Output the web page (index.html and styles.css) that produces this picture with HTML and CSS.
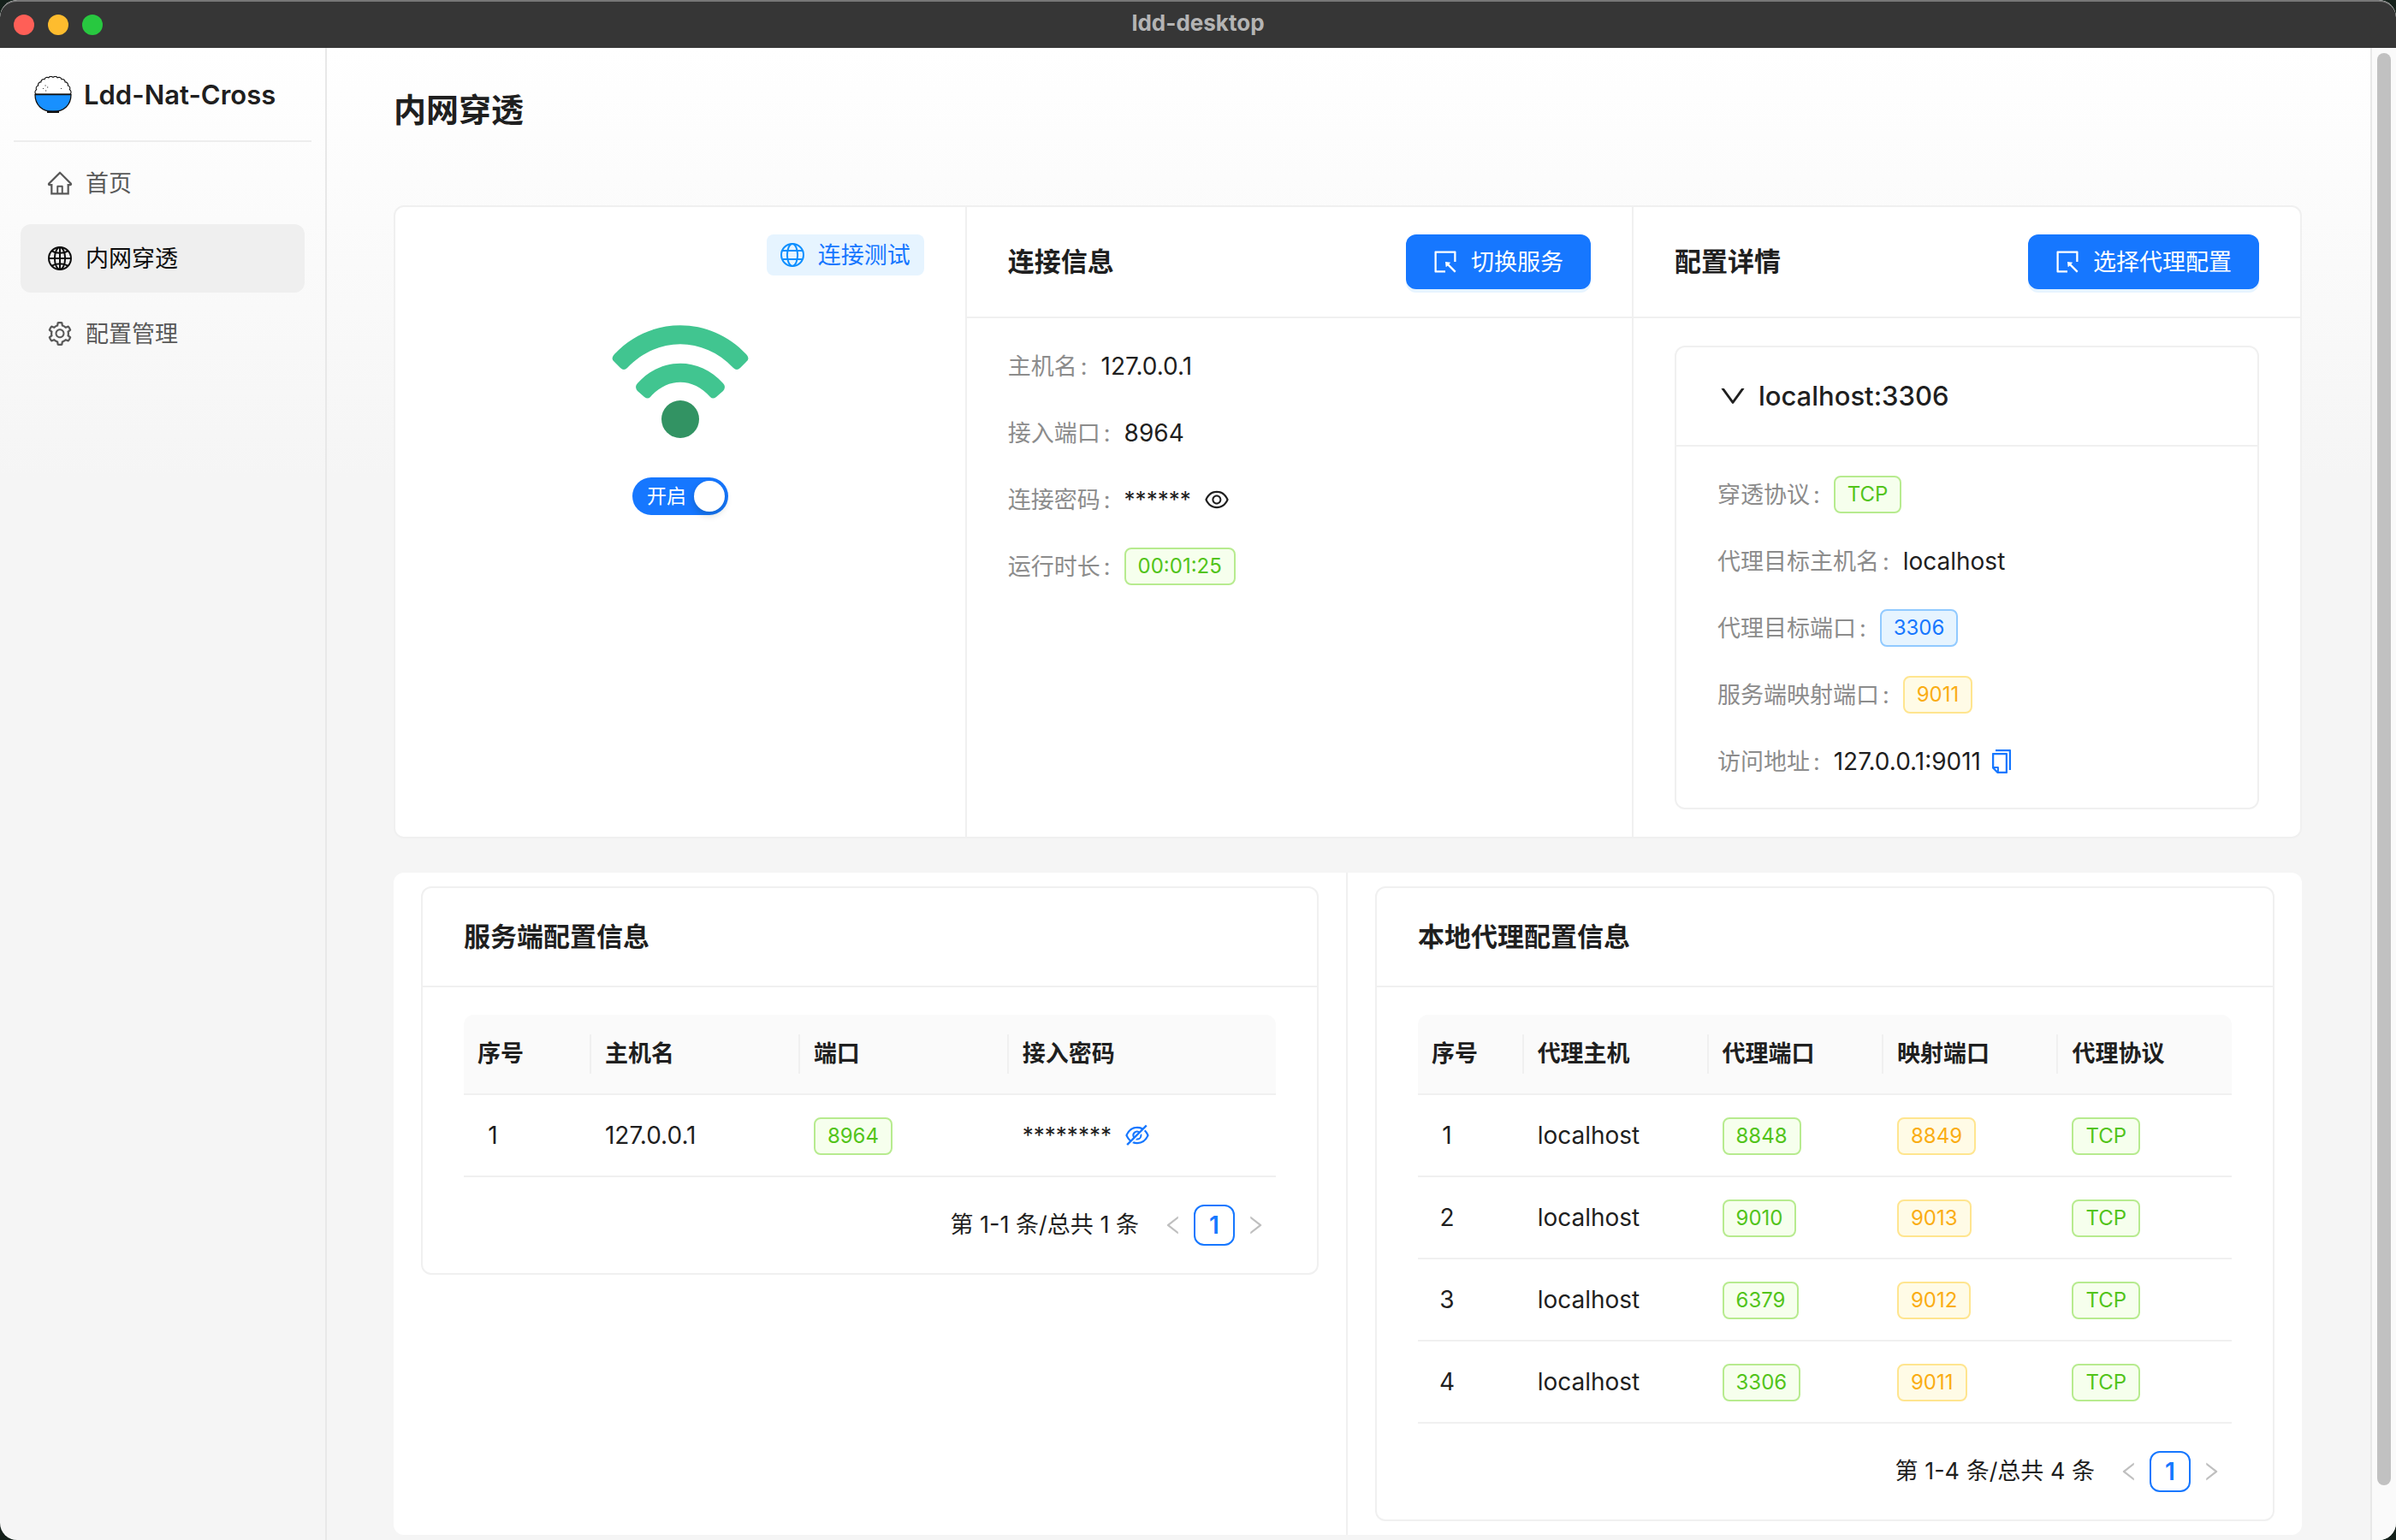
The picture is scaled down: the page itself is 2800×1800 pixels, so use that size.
FILE: index.html
```html
<!DOCTYPE html>
<html lang="zh-CN">
<head>
<meta charset="utf-8">
<title>ldd-desktop</title>
<link rel="stylesheet" href="styles.css">
</head>
<body>
<svg class="sprite" aria-hidden="true">
  <symbol id="i-home" viewBox="0 0 1024 1024"><path d="M946.5 505L560.1 118.8l-25.9-25.9a31.5 31.5 0 00-44.4 0L77.5 505a63.9 63.9 0 00-18.8 46c.4 35.2 29.7 63.3 64.9 63.3h42.5V940h691.8V614.3h43.4c17.1 0 33.2-6.7 45.3-18.8a63.6 63.6 0 0018.7-45.3c0-17-6.7-33.1-18.8-45.2zM568 868H456V664h112v204zm217.9-325.7V868H632V640c0-22.1-17.9-40-40-40H432c-22.1 0-40 17.9-40 40v228H238.1V542.3h-96l370-369.7 23.1 23.1L882 542.3h-96.1z"/></symbol>
  <symbol id="i-globe" viewBox="0 0 1024 1024"><g fill="none" stroke="currentColor" stroke-width="64"><circle cx="512" cy="512" r="415"/><ellipse cx="512" cy="512" rx="195" ry="415"/><path d="M512 97v830M97 512h830M215 235c150 100 444 100 594 0M215 789c150-100 444-100 594 0"/></g></symbol>
  <symbol id="i-globe-light" viewBox="0 0 1024 1024"><g fill="none" stroke="currentColor" stroke-width="64"><circle cx="512" cy="512" r="415"/><ellipse cx="512" cy="512" rx="195" ry="415"/><path d="M160 350h704M160 674h704"/></g></symbol>
  <symbol id="i-setting" viewBox="0 0 1024 1024"><path d="M924.8 625.7l-65.5-56c3.1-19 4.7-38.4 4.7-57.8s-1.6-38.8-4.7-57.8l65.5-56a32.03 32.03 0 009.3-35.2l-.9-2.6a443.74 443.74 0 00-79.7-137.9l-1.8-2.1a32.12 32.12 0 00-35.1-9.5l-81.3 28.9c-30-24.6-63.5-44-99.7-57.6l-15.7-85a32.05 32.05 0 00-25.8-25.7l-2.7-.5c-52.1-9.4-106.9-9.4-159 0l-2.7.5a32.05 32.05 0 00-25.8 25.7l-15.8 85.4a351.86 351.86 0 00-99 57.4l-81.9-29.1a32 32 0 00-35.1 9.5l-1.8 2.1a446.02 446.02 0 00-79.7 137.9l-.9 2.6c-4.5 12.5-.8 26.5 9.3 35.2l66.3 56.6c-3.1 18.8-4.6 38-4.6 57.1 0 19.2 1.5 38.4 4.6 57.1L99 625.5a32.03 32.03 0 00-9.3 35.2l.9 2.6c18.1 50.4 44.9 96.9 79.7 137.9l1.8 2.1a32.12 32.12 0 0035.1 9.5l81.9-29.1c29.8 24.5 63.1 43.9 99 57.4l15.8 85.4a32.05 32.05 0 0025.8 25.7l2.7.5a449.4 449.4 0 00159 0l2.7-.5a32.05 32.05 0 0025.8-25.7l15.7-85a350 350 0 0099.7-57.6l81.3 28.9a32 32 0 0035.1-9.5l1.8-2.1c34.8-41.1 61.6-87.5 79.7-137.9l.9-2.6c4.5-12.3.8-26.3-9.3-35zM788.3 465.9c2.5 15.1 3.8 30.6 3.8 46.1s-1.3 31-3.8 46.1l-6.6 40.1 74.7 63.9a370.03 370.03 0 01-42.6 73.6L721 702.8l-31.4 25.8c-23.9 19.6-50.5 35-79.3 45.8l-38.1 14.3-17.9 97a377.5 377.5 0 01-85 0l-17.9-97.2-37.8-14.5c-28.5-10.8-55-26.2-78.7-45.7l-31.4-25.9-93.4 33.2c-17-22.9-31.2-47.6-42.6-73.6l75.5-64.5-6.5-40c-2.4-14.9-3.7-30.3-3.7-45.5 0-15.3 1.2-30.6 3.7-45.5l6.5-40-75.5-64.5c11.3-26.1 25.6-50.7 42.6-73.6l93.4 33.2 31.4-25.9c23.7-19.5 50.2-34.9 78.7-45.7l37.9-14.3 17.9-97.2c28.1-3.2 56.8-3.2 85 0l17.9 97 38.1 14.3c28.7 10.8 55.4 26.2 79.3 45.8l31.4 25.8 92.8-32.9c17 22.9 31.2 47.6 42.6 73.6L781.8 426l6.5 39.9zM512 326c-97.2 0-176 78.8-176 176s78.8 176 176 176 176-78.8 176-176-78.8-176-176-176zm79.2 255.2A111.6 111.6 0 01512 614c-29.9 0-58-11.7-79.2-32.8A111.6 111.6 0 01400 502c0-29.9 11.7-58 32.8-79.2C454 401.6 482.1 390 512 390c29.9 0 58 11.6 79.2 32.8A111.6 111.6 0 01624 502c0 29.9-11.7 58-32.8 79.2z"/></symbol>
  <symbol id="i-select" viewBox="0 0 1024 1024"><path d="M880 112H144c-17.7 0-32 14.3-32 32v736c0 17.7 14.3 32 32 32h360c4.4 0 8-3.6 8-8v-56c0-4.4-3.6-8-8-8H184V184h656v320c0 4.4 3.6 8 8 8h56c4.4 0 8-3.6 8-8V144c0-17.7-14.3-32-32-32zM653.3 599.4l52.2-52.2a8.01 8.01 0 00-4.7-13.6l-179.4-21c-5.1-.6-9.5 3.7-8.9 8.9l21 179.4c.8 6.6 8.9 9.4 13.6 4.7l52.4-52.4 256.2 256.2c3.1 3.1 8.2 3.1 11.3 0l42.4-42.4c3.1-3.1 3.1-8.2 0-11.3L653.3 599.4z"/></symbol>
  <symbol id="i-eye" viewBox="0 0 1024 1024"><path d="M942.2 486.2C847.4 286.5 704.1 186 512 186c-192.2 0-335.4 100.5-430.2 300.3a60.3 60.3 0 000 51.5C176.6 737.5 319.9 838 512 838c192.2 0 335.4-100.5 430.2-300.3 7.7-16.2 7.7-35 0-51.5zM512 766c-161.3 0-279.4-81.8-362.7-254C232.6 339.8 350.7 258 512 258c161.3 0 279.4 81.8 362.7 254C791.5 684.2 673.4 766 512 766zm-4-430c-97.2 0-176 78.8-176 176s78.8 176 176 176 176-78.8 176-176-78.8-176-176-176zm0 288c-61.9 0-112-50.1-112-112s50.1-112 112-112 112 50.1 112 112-50.1 112-112 112z"/></symbol>
  <symbol id="i-eye-off" viewBox="0 0 1024 1024"><path d="M942.2 486.2Q889.47 375.11 816.7 305l-50.88 50.88C807.31 395.53 843.45 447.4 874.7 512 791.5 684.2 673.4 766 512 766q-72.67 0-133.87-22.38L323 798.75Q408 838 512 838q288.3 0 430.2-300.3a60.29 60.29 0 000-51.5zm-63.57-320.64L836 122.88a8 8 0 00-11.32 0L715.31 232.2Q624.86 186 512 186q-288.3 0-430.2 300.3a60.3 60.3 0 000 51.5q56.69 119.4 136.5 191.41L112.48 835a8 8 0 000 11.31L155.17 889a8 8 0 0011.31 0l712.15-712.12a8 8 0 000-11.32zM149.3 512C232.6 339.8 350.7 258 512 258c54.54 0 104.13 9.36 149.12 28.39l-70.3 70.3a176 176 0 00-238.13 238.13l-83.42 83.42C223.1 637.49 183.3 582.28 149.3 512zm246.7 0a112.11 112.11 0 01146.2-106.69L401.31 546.2A112 112 0 01396 512z"/><path d="M508 624c-3.46 0-6.87-.16-10.25-.47l-52.82 52.82a176.09 176.09 0 00227.42-227.42l-52.82 52.82c.31 3.38.47 6.79.47 10.25a111.94 111.94 0 01-112 112z"/></symbol>
  <symbol id="i-copy" viewBox="0 0 1024 1024"><path d="M832 64H296c-4.4 0-8 3.6-8 8v56c0 4.4 3.6 8 8 8h496v688c0 4.4 3.6 8 8 8h56c4.4 0 8-3.6 8-8V96c0-17.7-14.3-32-32-32zM704 192H192c-17.7 0-32 14.3-32 32v530.7c0 8.5 3.4 16.6 9.4 22.6l173.3 173.3c2.2 2.2 4.7 4 7.4 5.5v1.9h4.2c3.5 1.3 7.2 2 11 2H704c17.7 0 32-14.3 32-32V224c0-17.7-14.3-32-32-32zM350 856.2L263.9 770H350v86.2zM664 888H414V746c0-22.1-17.9-40-40-40H232V264h432v624z"/></symbol>
  <symbol id="i-down" viewBox="0 0 1024 1024"><path d="M884 256h-75c-5.1 0-9.9 2.5-12.9 6.6L512 654.2 227.9 262.6c-3-4.1-7.8-6.6-12.9-6.6h-75c-6.5 0-10.3 7.4-6.5 12.7l352.6 486.1c12.8 17.6 39 17.6 51.7 0l352.6-486.1c3.9-5.3.1-12.7-6.4-12.7z"/></symbol>
  <symbol id="i-left" viewBox="0 0 1024 1024"><path d="M724 218.3V141c0-6.7-7.7-10.4-12.9-6.3L260.3 486.8a31.86 31.86 0 000 50.3l450.8 352.1c5.3 4.1 12.9.4 12.9-6.3v-77.3c0-4.9-2.3-9.6-6.1-12.6l-360-281 360-281.1c3.8-3 6.1-7.7 6.1-12.6z"/></symbol>
  <symbol id="i-right" viewBox="0 0 1024 1024"><path d="M765.7 486.8L314.9 134.7A7.97 7.97 0 00302 141v77.3c0 4.9 2.3 9.6 6.1 12.6l360 281.1-360 281.1c-3.9 3-6.1 7.7-6.1 12.6V883c0 6.7 7.7 10.4 12.9 6.3l450.8-352.1a31.96 31.96 0 000-50.4z"/></symbol>
</svg>
<div class="window">
  <header class="titlebar">
    <div class="lights">
      <button class="light close" aria-label="关闭"></button>
      <button class="light minimize" aria-label="最小化"></button>
      <button class="light zoom" aria-label="缩放"></button>
    </div>
    <div class="window-title">ldd-desktop</div>
  </header>
  <div class="app">
    <aside class="sidebar">
      <div class="brand">
        <svg class="logo" viewBox="0 0 44 44" aria-hidden="true">
          <path d="M2 21A3.200 3.200 0 0 1 2.700 15.800A3.200 3.200 0 0 1 4.700 11A3.200 3.200 0 0 1 7.900 6.900A3.200 3.200 0 0 1 12 3.700A3.200 3.200 0 0 1 16.800 1.900A3.200 3.200 0 0 1 22 1.500A3.200 3.200 0 0 1 27.200 1.900A3.200 3.200 0 0 1 32 3.700A3.200 3.200 0 0 1 36.100 6.900A3.200 3.200 0 0 1 39.300 11A3.200 3.200 0 0 1 41.300 15.800A3.200 3.200 0 0 1 42 21z" fill="#fff" stroke="#111" stroke-width="1.100"/>
          <path d="M1 21.500h42c0 12-8 20-21 20S1 33.500 1 21.500z" fill="#1890ff" stroke="#111" stroke-width="1.300"/>
          <path d="M15 41.800h14" stroke="#111" stroke-width="2.400"/>
          <path d="M12.500 11h1.200M15 13h1.200M10 14.500h1M13 17h1.200M31 14.500h1" stroke="#333" stroke-width="1.100"/>
        </svg>
        <h1 class="brand-name">Ldd-Nat-Cross</h1>
      </div>
      <nav class="menu">
        <a class="menu-item" href="#"><svg class="icon"><use href="#i-home"/></svg><span class="cjk">首页</span></a>
        <a class="menu-item active" href="#"><svg class="icon"><use href="#i-globe"/></svg><span class="cjk">内网穿透</span></a>
        <a class="menu-item" href="#"><svg class="icon"><use href="#i-setting"/></svg><span class="cjk">配置管理</span></a>
      </nav>
    </aside>
    <main class="page">
      <h2 class="page-title">内网穿透</h2>
      <section class="overview">
        <div class="status">
          <button class="test-btn"><svg class="icon"><use href="#i-globe-light"/></svg><span class="cjk">连接测试</span></button>
          <svg class="wifi" viewBox="0 0 160 132" aria-hidden="true">
            <path d="M3 34C45-11 115-11 157 34q5 5 0 9l-7 7q-4 4-8 0C107 13 53 13 18 50q-4 4-8 0l-7-7q-5-4 0-9z" fill="#41c590"/>
            <path d="M30 68C58 37 102 37 130 68q4 4 0 9l-8 7q-4 3-7 0C95 61 65 61 45 84q-3 3-7 0l-8-7q-4-5 0-9z" fill="#41c590"/>
            <circle cx="80" cy="110" r="22" fill="#329363"/>
          </svg>
          <label class="switch"><input type="checkbox" role="switch" checked><span class="switch-text">开启</span></label>
        </div>
        <div class="pane">
          <div class="pane-head">
            <h3 class="card-title">连接信息</h3>
            <button class="primary-btn"><svg class="icon"><use href="#i-select"/></svg><span class="cjk">切换服务</span></button>
          </div>
          <dl class="details">
            <div class="detail"><dt>主机名</dt><dd>127.0.0.1</dd></div>
            <div class="detail"><dt>接入端口</dt><dd>8964</dd></div>
            <div class="detail"><dt>连接密码</dt><dd class="secret">******<button class="icon-btn" aria-label="显示密码"><svg class="icon"><use href="#i-eye"/></svg></button></dd></div>
            <div class="detail"><dt>运行时长</dt><dd><span class="tag green">00:01:25</span></dd></div>
          </dl>
        </div>
        <div class="pane">
          <div class="pane-head">
            <h3 class="card-title">配置详情</h3>
            <button class="primary-btn"><svg class="icon"><use href="#i-select"/></svg><span class="cjk">选择代理配置</span></button>
          </div>
          <div class="pane-body">
            <div class="card">
              <div class="card-head">
                <button class="collapse"><svg class="icon"><use href="#i-down"/></svg>localhost:3306</button>
              </div>
              <dl class="details">
                <div class="detail"><dt>穿透协议</dt><dd><span class="tag green">TCP</span></dd></div>
                <div class="detail"><dt>代理目标主机名</dt><dd>localhost</dd></div>
                <div class="detail"><dt>代理目标端口</dt><dd><span class="tag blue">3306</span></dd></div>
                <div class="detail"><dt>服务端映射端口</dt><dd><span class="tag gold">9011</span></dd></div>
                <div class="detail"><dt>访问地址</dt><dd class="address">127.0.0.1:9011<button class="icon-btn link" aria-label="复制"><svg class="icon"><use href="#i-copy"/></svg></button></dd></div>
              </dl>
            </div>
          </div>
        </div>
      </section>
      <section class="tables">
        <div class="table-col">
          <div class="card">
            <div class="card-head"><h3 class="card-title">服务端配置信息</h3></div>
            <div class="card-body">
              <table class="data">
                <colgroup><col class="w-index"><col class="w-quarter"><col class="w-quarter"><col></colgroup>
                <thead><tr><th>序号</th><th>主机名</th><th>端口</th><th>接入密码</th></tr></thead>
                <tbody>
                  <tr><td><span class="index">1</span></td><td>127.0.0.1</td><td><span class="tag green">8964</span></td><td><span class="secret">********<button class="icon-btn link" aria-label="显示密码"><svg class="icon"><use href="#i-eye-off"/></svg></button></span></td></tr>
                </tbody>
              </table>
              <div class="pager">
                <span class="total">第 1-1 条/总共 1 条</span>
                <button class="page-arrow" disabled aria-label="上一页"><svg class="icon"><use href="#i-left"/></svg></button>
                <button class="page-num">1</button>
                <button class="page-arrow" disabled aria-label="下一页"><svg class="icon"><use href="#i-right"/></svg></button>
              </div>
            </div>
          </div>
        </div>
        <div class="table-col">
          <div class="card">
            <div class="card-head"><h3 class="card-title">本地代理配置信息</h3></div>
            <div class="card-body">
              <table class="data">
                <colgroup><col class="w-narrow"><col class="w-host"><col class="w-port"><col class="w-port"><col></colgroup>
                <thead><tr><th>序号</th><th>代理主机</th><th>代理端口</th><th>映射端口</th><th>代理协议</th></tr></thead>
                <tbody>
                  <tr><td><span class="index">1</span></td><td>localhost</td><td><span class="tag green">8848</span></td><td><span class="tag gold">8849</span></td><td><span class="tag green">TCP</span></td></tr>
                  <tr><td><span class="index">2</span></td><td>localhost</td><td><span class="tag green">9010</span></td><td><span class="tag gold">9013</span></td><td><span class="tag green">TCP</span></td></tr>
                  <tr><td><span class="index">3</span></td><td>localhost</td><td><span class="tag green">6379</span></td><td><span class="tag gold">9012</span></td><td><span class="tag green">TCP</span></td></tr>
                  <tr><td><span class="index">4</span></td><td>localhost</td><td><span class="tag green">3306</span></td><td><span class="tag gold">9011</span></td><td><span class="tag green">TCP</span></td></tr>
                </tbody>
              </table>
              <div class="pager">
                <span class="total">第 1-4 条/总共 4 条</span>
                <button class="page-arrow" disabled aria-label="上一页"><svg class="icon"><use href="#i-left"/></svg></button>
                <button class="page-num">1</button>
                <button class="page-arrow" disabled aria-label="下一页"><svg class="icon"><use href="#i-right"/></svg></button>
              </div>
            </div>
          </div>
        </div>
      </section>
    </main>
    <div class="scrollbar" aria-hidden="true"><div class="thumb"></div></div>
  </div>
</div>
</body>
</html>
```
FILE: styles.css
```css
* { box-sizing: border-box; }

body {
  margin: 0;
  background: #14201a;
  color: #1f1f1f;
  font-family: Inter, "Noto Sans CJK SC", sans-serif;
  font-size: 28px;
  line-height: 44px;
}

h1, h2, h3, dl, dd { margin: 0; }

button {
  margin: 0;
  padding: 0;
  border: 0;
  background: none;
  color: inherit;
  font: inherit;
  cursor: pointer;
}

.sprite { display: none; }

.icon {
  display: block;
  flex: none;
  width: 32px;
  height: 32px;
  fill: currentColor;
}

/* Optical centring of Chinese labels beside icons and values */
.cjk, .detail dt { padding-top: 2px; }

/* Window frame */
.window {
  display: flex;
  flex-direction: column;
  min-height: 100vh;
  overflow: hidden;
  border-radius: 20px;
  background: linear-gradient(#fff 56px, #f5f5f5 31%);
}

.titlebar {
  display: grid;
  grid-template-columns: 1fr auto 1fr;
  align-items: center;
  height: 56px;
  padding: 0 16px;
  border-top: 2px solid #777;
  border-radius: 20px 20px 0 0;
  background: #363636;
}

.lights { display: flex; gap: 16px; }
.light { width: 24px; height: 24px; border-radius: 50%; }
.close { background: #ff5f57; }
.minimize { background: #febc2e; }
.zoom { background: #28c840; }

.window-title {
  padding-bottom: 4px;
  color: #b4b4b4;
  font-size: 26px;
  font-weight: 700;
}

.app { display: flex; flex: 1; }

/* Sidebar */
.sidebar {
  flex: none;
  width: 382px;
  border-right: 2px solid #e8e8e8;
}

.brand {
  display: flex;
  align-items: center;
  gap: 14px;
  height: 110px;
  margin: 0 16px;
  padding: 2px 24px 0;
  border-bottom: 2px solid #ededed;
}

.logo { flex: none; width: 44px; height: 44px; }
.brand-name { font-size: 31px; font-weight: 600; white-space: nowrap; }

.menu {
  display: flex;
  flex-direction: column;
  gap: 8px;
  padding: 8px 24px;
}

.menu-item {
  display: flex;
  align-items: center;
  gap: 14px;
  height: 80px;
  padding: 0 30px;
  border-radius: 12px;
  color: #595959;
  font-size: 27px;
  text-decoration: none;
}

.menu-item.active { background: #efefef; color: #0d0d0d; }

/* Page */
.page {
  flex: 1;
  min-width: 0;
  padding: 42px 80px 6px 78px;
}

.page-title {
  margin-bottom: 82px;
  font-size: 38px;
  font-weight: 600;
  line-height: 60px;
}

.overview {
  display: grid;
  grid-template-columns: 30% 35% 35%;
  margin-bottom: 40px;
  border: 2px solid #f0f0f0;
  border-radius: 12px;
  background: #fff;
}

.status {
  display: flex;
  flex-direction: column;
  align-items: center;
  padding: 32px 48px;
}

.test-btn {
  display: flex;
  align-items: center;
  align-self: flex-end;
  gap: 14px;
  height: 48px;
  padding: 0 16px 0 14px;
  border-radius: 8px;
  background: #e6f4ff;
  color: #1677ff;
  font-size: 27px;
}

.test-btn .icon { color: #0d8fff; }

.wifi { width: 160px; height: 132px; margin: 58px 0 46px; }

.switch { display: grid; align-items: center; color: #fff; font-size: 23px; cursor: pointer; }

.switch input {
  grid-area: 1 / 1;
  appearance: none;
  display: flex;
  justify-content: flex-end;
  width: 112px;
  height: 44px;
  margin: 0;
  padding: 4px;
  border-radius: 22px;
  background: #1677ff;
}

.switch input::before {
  content: "";
  width: 36px;
  height: 36px;
  border-radius: 50%;
  background: #fff;
  box-shadow: 0 4px 8px rgba(0, 35, 11, .2);
}

.switch-text { grid-area: 1 / 1; padding-left: 17px; }

.status, .pane:not(:last-child) { border-right: 2px solid #f0f0f0; }

.pane-head {
  display: flex;
  align-items: center;
  justify-content: space-between;
  height: 130px;
  padding: 0 48px;
  border-bottom: 2px solid #f0f0f0;
}

.card-title { font-size: 31px; font-weight: 600; }

.primary-btn {
  display: flex;
  align-items: center;
  gap: 14px;
  height: 64px;
  padding: 0 32px 0 30px;
  border-radius: 12px;
  background: #1677ff;
  box-shadow: 0 4px 0 rgba(5, 145, 255, .1);
  color: #fff;
  font-size: 27px;
}

.pane-body { padding: 32px 48px; }

.details {
  display: flex;
  flex-direction: column;
  gap: 30px;
  padding: 32px 48px 30px;
}

.detail { display: flex; align-items: center; height: 48px; }
.detail dt { color: #8c8c8c; font-size: 27px; white-space: nowrap; }
.detail dt::after { content: ":"; margin: 0 16px 0 4px; }
.detail dd { display: flex; align-items: center; }

.detail .secret, .secret { display: flex; align-items: center; gap: 14px; font-size: 26px; }
.address { gap: 8px; }
.link { color: #1677ff; }

/* Cards */
.card {
  border: 2px solid #f0f0f0;
  border-radius: 12px;
  background: #fff;
}

.card-head {
  display: flex;
  align-items: center;
  height: 116px;
  padding: 0 48px;
  border-bottom: 2px solid #f0f0f0;
}

.collapse {
  display: flex;
  align-items: center;
  gap: 12px;
  font-size: 31px;
  font-weight: 500;
}

.collapse .icon { width: 36px; height: 36px; }

.card-body { padding: 32px 48px; }

/* Tags */
.tag {
  display: inline-block;
  height: 44px;
  padding: 0 14px;
  border: 2px solid;
  border-radius: 8px;
  font-size: 24px;
  line-height: 40px;
  vertical-align: middle;
}

.green { border-color: #b7eb8f; background: #f6ffed; color: #52c41a; }
.blue { border-color: #91caff; background: #e6f4ff; color: #1677ff; }
.gold { border-color: #ffe58f; background: #fffbe6; color: #faad14; }

/* Tables */
.tables {
  display: grid;
  grid-template-columns: 1fr 1fr;
  border-radius: 12px;
  background: #fff;
}

.table-col { padding: 16px 32px; }
.table-col:first-child { border-right: 2px solid #f0f0f0; }

.data {
  width: 100%;
  border-collapse: separate;
  border-spacing: 0;
  table-layout: fixed;
}

.w-index { width: 15.7%; }
.w-quarter { width: 25.7%; }
.w-narrow { width: 13%; }
.w-host { width: 22.7%; }
.w-port { width: 21.5%; }

.data th,
.data td {
  padding: 0 16px;
  border-bottom: 2px solid #f0f0f0;
  text-align: left;
}

.data th {
  position: relative;
  height: 94px;
  background: #fafafa;
  font-size: 27px;
  font-weight: 600;
}

.data th:not(:last-child)::after {
  content: "";
  position: absolute;
  top: 23px;
  right: 0;
  width: 2px;
  height: 46px;
  background: #f0f0f0;
}

.data th:first-child { border-top-left-radius: 12px; }
.data th:last-child { border-top-right-radius: 12px; }
.data td { height: 96px; }

.index { display: inline-block; width: 36px; text-align: center; }

.pager {
  display: flex;
  align-items: center;
  justify-content: flex-end;
  margin-top: 32px;
}

.total { margin-right: 16px; font-size: 27px; }

.page-arrow {
  display: grid;
  place-items: center;
  width: 48px;
  height: 48px;
  color: #bfbfbf;
}

.page-arrow .icon { width: 28px; height: 28px; }

.page-num {
  width: 48px;
  height: 48px;
  border: 2px solid #1677ff;
  border-radius: 12px;
  color: #1677ff;
  font-weight: 600;
}

/* Scrollbar */
.scrollbar {
  display: flex;
  flex: none;
  width: 30px;
  padding: 6px 6px 64px;
  border-left: 2px solid #e8e8e8;
  background: #fafafa;
}

.thumb { flex: 1; border-radius: 8px; background: #c1c1c1; }
```
